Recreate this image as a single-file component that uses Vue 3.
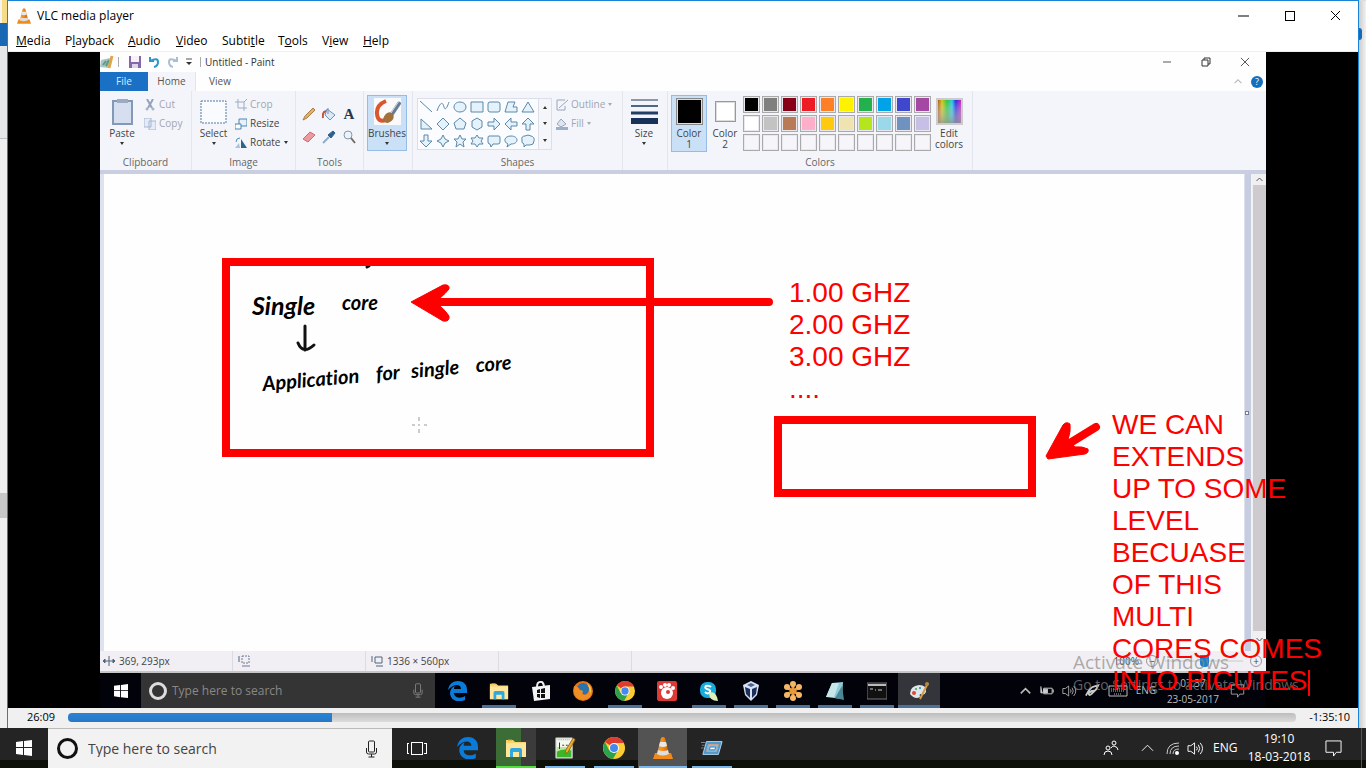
<script setup>
import { ref, computed } from 'vue'

const menus = [
  ['', 'M', 'edia'], ['P', 'l', 'ayback'], ['', 'A', 'udio'], ['', 'V', 'ideo'],
  ['Subti', 't', 'le'], ['T', 'o', 'ols'], ['V', 'i', 'ew'], ['', 'H', 'elp'],
]

const position = ref(215)
const seekStyle = computed(() => ({ '--played': position.value / 10 + '%' }))

const shapes = [
  'M2 2L14 13', 'M2 12C6 1 8 4 9 8S12 9 14 3', 'M8 3C16 3 16 13 8 13S0 3 8 3Z', 'M2 3H14V13H2Z',
  'M4 3H12Q14 3 14 5V11Q14 13 12 13H4Q2 13 2 11V5Q2 3 4 3Z', 'M2 13L5 3H12L10 8H14V13Z', 'M8 3L14 13H2Z',
  'M3 3L14 13H3Z', 'M8 2L14 8L8 14L2 8Z', 'M8 2L14 7L12 13H4L2 7Z', 'M8 2L13 5V11L8 14L3 11V5Z',
  'M2 6H8V2L14 8L8 14V10H2Z', 'M14 6H8V2L2 8L8 14V10H14Z', 'M6 14V8H2L8 2L14 8H10V14Z',
  'M6 2V8H2L8 14L14 8H10V2Z', 'M8 2L10 6L14 8L10 10L8 14L6 10L2 8L6 6Z',
  'M8 2L10 6H14L11 9L12 14L8 11L4 14L5 9L2 6H6Z', 'M8 2L10 5H14L12 8L14 11H10L8 14L6 11H2L4 8L2 5H6Z',
  'M3 3H13Q14 3 14 5V9Q14 11 12 11H7L5 14L4 11Q2 11 2 9V5Q2 3 3 3Z',
  'M8 3C16 3 16 11 8 11L4 14L5 11C0 9 1 3 8 3Z', 'M5 3Q8 1 11 3Q15 4 14 8Q14 12 10 12H6L4 14V11Q1 10 2 7Q1 3 5 3Z',
]

const palette = [
  '#000000', '#7f7f7f', '#880015', '#ed1c24', '#ff7f27', '#fff200', '#22b14c', '#00a2e8', '#3f48cc', '#a349a4',
  '#ffffff', '#c3c3c3', '#b97a57', '#ffaec9', '#ffc90e', '#efe4b0', '#b5e61d', '#99d9ea', '#7092be', '#c8bfe7',
  '#f6f6fa', '#f6f6fa', '#f6f6fa', '#f6f6fa', '#f6f6fa', '#f6f6fa', '#f6f6fa', '#f6f6fa', '#f6f6fa', '#f6f6fa',
]

const guestApps = [
  { id: 'edge', name: 'Edge' }, { id: 'folder', name: 'File Explorer', open: true }, { id: 'store', name: 'Store' },
  { id: 'firefox', name: 'Firefox' }, { id: 'chrome', name: 'Chrome', open: true }, { id: 'gom', name: 'Recorder' },
  { id: 'skype', name: 'Skype', open: true }, { id: 'vbox', name: 'VirtualBox', open: true },
  { id: 'flower', name: 'Meeting', open: true }, { id: 'notepad', name: 'Notepad', open: true },
  { id: 'cmd', name: 'Command Prompt', open: true }, { id: 'paint', name: 'Paint', open: true, active: true },
]

const hostApps = [
  { id: 'edge', name: 'Edge' }, { id: 'folder', name: 'File Explorer', cls: 'copying' },
  { id: 'npp', name: 'Text editor', cls: 'open' }, { id: 'chrome', name: 'Chrome', cls: 'open' },
  { id: 'vlc', name: 'VLC media player', cls: 'open active' }, { id: 'run', name: 'Run', cls: 'open' },
]

const notes = ['WE CAN', 'EXTENDS', 'UP TO SOME', 'LEVEL', 'BECUASE', 'OF THIS', 'MULTI', 'CORES COMES', 'INTO PICUTES']
const speeds = ['1.00 GHZ', '2.00 GHZ', '3.00 GHZ', '....']
</script>

<template>
  <div class="desktop">
    <svg class="defs" aria-hidden="true">
      <defs>
        <linearGradient id="cone" x1="0" x2="1"><stop offset="0" stop-color="#f9a13a" /><stop offset=".5" stop-color="#f58a12" /><stop offset="1" stop-color="#c95d00" /></linearGradient>
        <linearGradient id="rainbow" x1="0" x2="1"><stop offset="0" stop-color="#a63c14" /><stop offset=".2" stop-color="#d4c51c" /><stop offset=".4" stop-color="#2ac43a" /><stop offset=".6" stop-color="#28c8e8" /><stop offset=".75" stop-color="#2a2ae0" /><stop offset="1" stop-color="#e426b4" /></linearGradient>
        <linearGradient id="shade" x1="0" x2="0" y1="0" y2="1"><stop offset="0" stop-color="#fff" stop-opacity="0" /><stop offset="1" stop-color="#999" stop-opacity=".8" /></linearGradient>
        <symbol id="vlc" viewBox="0 0 20 22"><path d="M2 16H18L20 22H0Z" fill="#f28a18" /><path d="M8 1Q10-1 12 1L16 17Q10 21 4 17Z" fill="url(#cone)" /><path d="M7 5H13L14 9Q10 11 6 9Z" fill="#e8e8e8" /><path d="M5 13Q10 15 15 13L16 17Q10 20 4 17Z" fill="#dedede" /></symbol>
        <symbol id="edge" viewBox="0 0 20 20"><path d="M1 9C2 3 6 0 11 0C17 0 20 4 20 9V12H7C7 17 14 18 18 15V19C10 23 3 18 3 12C3 9 5 6 8 5C7 6 7 7 7 8H14C14 3 7 2 1 9Z" fill="#0a7bd8" /></symbol>
        <symbol id="folder" viewBox="0 0 22 20"><path d="M1 2H8L10 4H21V19H1Z" fill="#f7d56c" /><path d="M1 5H21V19H1Z" fill="#ffe69a" /><path d="M5 19V12Q5 10 7 10H15Q17 10 17 12V19H14V14H8V19Z" fill="#2fa7df" /><path d="M3 2H7" stroke="#e39b20" /></symbol>
        <symbol id="store" viewBox="0 0 20 20"><path d="M1 6L19 4V18L3 20Z" fill="#f4f4f4" /><path d="M6 6Q6 1 9 1Q12 0 13 5" fill="none" stroke="#eee" stroke-width="2" /><path d="M6 9L9 8V12H6ZM10 8L14 7V12H10ZM6 13H9V17L6 16ZM10 13H14V17H10Z" fill="#111" /></symbol>
        <symbol id="firefox" viewBox="0 0 20 20"><circle cx="10" cy="10" r="10" fill="#e5731a" /><circle cx="10" cy="8" r="6" fill="#2973ae" /><path d="M1 5Q5 5 7 9Q10 9 10 11Q8 13 12 14Q18 12 17 4Q21 11 17 16Q10 22 3 16Q0 12 1 5Z" fill="#f18d23" /><path d="M14 2Q20 7 17 13Q17 7 14 2Z" fill="#ffd147" /></symbol>
        <symbol id="chrome" viewBox="0 0 22 22"><circle cx="11" cy="11" r="11" fill="#fccd32" /><path d="M11 11L2 5A11 11 0 0 1 21 6H11Z" fill="#df3c30" /><path d="M2 5A11 11 0 0 0 10 22L15 13L11 11L6 13Z" fill="#2ba24c" /><circle cx="11" cy="11" r="5" fill="#fff" /><circle cx="11" cy="11" r="4" fill="#4688ef" /></symbol>
        <symbol id="gom" viewBox="0 0 20 20"><rect width="20" height="20" rx="2" fill="#dd3a37" /><circle cx="10" cy="12" r="6" fill="#fff" /><circle cx="4" cy="6" r="2" fill="#fff" /><circle cx="8" cy="4" r="2" fill="#fff" /><circle cx="12" cy="4" r="2" fill="#fff" /><circle cx="16" cy="7" r="2" fill="#fff" /><circle cx="11" cy="11" r="2" fill="#dd3a37" /></symbol>
        <symbol id="skype" viewBox="0 0 20 20"><rect x="1" y="1" width="16" height="16" rx="7" fill="#18acdc" /><path d="M12 6Q10 4 7 5Q5 7 8 8Q12 9 11 11Q9 14 6 11" fill="none" stroke="#fff" stroke-width="2" /><path d="M10 12Q17 9 19 20Q10 20 10 12Z" fill="#dff0b6" /></symbol>
        <symbol id="vbox" viewBox="0 0 20 20"><path d="M10 0L18 4L16 14L10 20L4 14L2 4Z" fill="#d9e2f2" /><path d="M4 6L9 8V17L5 13ZM16 6L11 8V17L15 13Z" fill="#1c2f5c" /><path d="M6 4L10 2L14 4L10 6Z" fill="#4a6294" /></symbol>
        <symbol id="flower" viewBox="0 0 20 20"><g stroke="#e79a3c" stroke-width="3" stroke-linecap="round"><path d="M10 2V18M3 6L17 14M17 6L3 14" /></g><g fill="#f4b768"><circle cx="10" cy="3" r="3" /><circle cx="10" cy="17" r="3" /><circle cx="4" cy="6" r="3" /><circle cx="16" cy="6" r="3" /><circle cx="4" cy="14" r="3" /><circle cx="16" cy="14" r="3" /></g></symbol>
        <symbol id="notepad" viewBox="0 0 20 20"><path d="M7 2L18 1L17 18L1 16Z" fill="#8fcbd6" /><path d="M7 2L14 2L9 16L1 16Z" fill="#c7e6ea" /><path d="M17 5L19 19L10 17Z" fill="#4c8794" /></symbol>
        <symbol id="cmd" viewBox="0 0 20 20"><rect y="2" width="20" height="16" fill="#111" stroke="#777" /><path d="M1 3H19V5H1Z" fill="#bbb" /><path d="M3 8H6M8 9H9M11 9H15" stroke="#ccc" /></symbol>
        <symbol id="paint" viewBox="0 0 20 20"><path d="M1 13Q1 5 10 4Q18 4 17 11Q15 15 12 13Q10 13 11 16Q6 19 1 13Z" fill="#dfe6ea" /><circle cx="5" cy="12" r="2" fill="#d94a3a" /><circle cx="7" cy="8" r="1" fill="#49a04b" /><circle cx="11" cy="7" r="1" fill="#2a7ac4" /><path d="M11 18L19 2" stroke="#d19b4a" stroke-width="2" /><circle cx="18" cy="3" r="2" fill="#b88639" /></symbol>
        <symbol id="paintfile" viewBox="0 0 14 14"><path d="M1 5L10 3L9 13L0 12Z" fill="#a9c6c4" /><path d="M3 10L6 6M6 11L9 5" stroke="#5d9a80" stroke-width="2" /><path d="M9 13L12 1" stroke="#e0a44a" stroke-width="3" /></symbol>
        <symbol id="npp" viewBox="0 0 22 24"><path d="M1 1H19V23H1Z" fill="#f4f8ee" stroke="#bbb" /><path d="M2 15Q10 11 18 13V22H2Z" fill="#3cb52b" /><path d="M2 11H18V15Q10 12 2 16Z" fill="#b9e59a" /><path d="M3 3H17" stroke="#999" stroke-dasharray="1 1" /><path d="M5 6V13M8 9H10M12 9H14" stroke="#222" stroke-width="1" /><path d="M20 1L22 3L14 17L11 18L12 14Z" fill="#f0ad28" stroke="#94631c" /></symbol>
        <symbol id="run" viewBox="0 0 24 18"><path d="M6 2H23L19 16H2Z" fill="#4598d4" stroke="#b9dcf3" /><path d="M8 5H19L17 13H6Z" fill="#85bce0" stroke="#df9d70" /><path d="M10 8H16L15 11H9Z" fill="#fff" stroke="#2a78c0" /><path d="M0 3H5M1 6H4M0 9H3" stroke="#889" /></symbol>
        <symbol id="win" viewBox="0 0 16 16"><path d="M0 2L7 1V7H0ZM8 1L16 0V7H8ZM0 8H7V15L0 14ZM8 8H16V16L8 15Z" fill="#fff" /></symbol>
        <symbol id="mic" viewBox="0 0 12 18"><rect x="3" y="1" width="6" height="11" rx="1" fill="none" stroke="currentColor" /><path d="M1 8V12Q1 14 3 14H9Q11 14 11 12V8M6 14V17M3 17H9" fill="none" stroke="currentColor" /></symbol>
        <symbol id="up" viewBox="0 0 14 8"><path d="M1 7L7 1L13 7" fill="none" stroke="currentColor" stroke-width="1" /></symbol>
        <symbol id="upbold" viewBox="0 0 14 8"><path d="M1 7L7 1L13 7" fill="none" stroke="currentColor" stroke-width="2" /></symbol>
        <symbol id="speaker" viewBox="0 0 18 16"><path d="M1 5H4L8 2V14L4 11H1Z" fill="none" stroke="currentColor" /><path d="M10 6Q12 8 10 10M12 4Q15 8 12 12M14 2Q19 8 14 14" fill="none" stroke="currentColor" /></symbol>
        <symbol id="note" viewBox="0 0 18 18"><path d="M1 1H17V13H12L9 17V13H1Z" fill="none" stroke="currentColor" stroke-width="1" /></symbol>
        <symbol id="min" viewBox="0 0 11 11"><path d="M0 6H11" stroke="currentColor" /></symbol>
        <symbol id="close" viewBox="0 0 11 11"><path d="M1 1L10 10M10 1L1 10" stroke="currentColor" /></symbol>
      </defs>
    </svg>

    <div class="behind left" aria-hidden="true"><i class="tab"></i><i class="blue"></i><i class="pane"></i><i class="list"></i><i class="mark"></i></div>

    <main class="window">
      <header class="titlebar">
        <svg class="logo"><use href="#vlc" /></svg>
        <h1>VLC media player</h1>
        <button aria-label="Minimize"><svg><use href="#min" /></svg></button>
        <button aria-label="Maximize"><svg viewBox="0 0 11 11" shape-rendering="crispEdges"><path d="M1 1H10V10H1Z" fill="none" stroke="#000" /></svg></button>
        <button aria-label="Close"><svg><use href="#close" /></svg></button>
      </header>
      <nav class="menubar">
        <button v-for="m in menus" :key="m.join('')">{{ m[0] }}<u>{{ m[1] }}</u>{{ m[2] }}</button>
      </nav>

      <section class="video">
        <div class="screen">
          <header class="ptitle">
            <svg class="picon"><use href="#paintfile" /></svg>
            <i class="bar"></i>
            <button aria-label="Save"><svg viewBox="0 0 12 12"><path d="M0 0H12V12H0Z" fill="#8468a8" /><path d="M2 0H10V6H2Z" fill="#f5f2fa" /><path d="M3 8H9V12H3Z" fill="#ddd3ea" /></svg></button>
            <button aria-label="Undo"><svg viewBox="0 0 12 12"><path d="M2 1V5H6M2 5Q10 1 10 6Q10 10 6 11" fill="none" stroke="#2f96c8" stroke-width="2" /></svg></button>
            <button aria-label="Redo"><svg viewBox="0 0 12 12"><path d="M10 1V5H6M10 5Q2 1 2 6Q2 10 6 11" fill="none" stroke="#a9bfd2" stroke-width="2" /></svg></button>
            <button class="more" aria-label="Customize toolbar"><svg viewBox="0 0 6 8"><path d="M0 1H6" stroke="#555" /><path d="M0 4H6L3 7Z" fill="#333" /></svg></button>
            <i class="bar"></i>
            <h2>Untitled - Paint</h2>
            <button class="ctl dim" aria-label="Minimize Paint"><svg viewBox="0 0 10 10"><path d="M1 5H9" stroke="#aaa" stroke-width="2" /></svg></button>
            <button class="ctl" aria-label="Restore Paint"><svg viewBox="0 0 10 10"><path d="M1 3H7V9H1ZM3 3V1H9V7H7" fill="none" stroke="#333" /></svg></button>
            <button class="ctl" aria-label="Close Paint"><svg><use href="#close" /></svg></button>
          </header>
          <nav class="ptabs">
            <button class="file">File</button><button class="on">Home</button><button>View</button>
            <span class="grow"></span>
            <svg class="chev"><use href="#upbold" /></svg>
            <button class="help" aria-label="Help">?</button>
          </nav>

          <section class="ribbon">
            <div class="group clip">
              <div class="body">
                <button class="big"><svg viewBox="0 0 27 27"><path d="M4 3H23V26H4Z" fill="#d5dff0" stroke="#8498b8" stroke-width="2" /><path d="M8 1H19V5H8Z" fill="#9cabc2" /></svg>Paste<b class="arr"></b></button>
                <div class="rows off">
                  <button><svg viewBox="0 0 12 12"><path d="M3 0L8 9M9 0L4 9" stroke="#95a4ba" stroke-width="2" /><circle cx="3" cy="10" r="1" fill="none" stroke="#8ca0ba" /><circle cx="9" cy="10" r="1" fill="none" stroke="#8ca0ba" /></svg>Cut</button>
                  <button><svg viewBox="0 0 12 12"><path d="M0 0H7V9H0ZM5 3H12V12H5Z" fill="#e6ecf7" stroke="#a6b5d2" /></svg>Copy</button>
                </div>
              </div>
              <h3>Clipboard</h3>
            </div>
            <div class="group image">
              <div class="body">
                <button class="big"><svg viewBox="0 0 27 27"><path d="M1 3H26V25H1Z" fill="#f9fbff" stroke="#527ba5" stroke-dasharray="2 1" /></svg>Select<b class="arr"></b></button>
                <div class="rows">
                  <button class="off"><svg viewBox="0 0 12 12"><path d="M3 0V9H12M0 3H9V12M9 3L12 0" fill="none" stroke="#9caec5" /></svg>Crop</button>
                  <button><svg viewBox="0 0 12 12"><path d="M4 1H12V8H4Z" fill="#e6f1fb" stroke="#4b84b2" /><path d="M0 6H6V11H0Z" fill="#fff" stroke="#4b84b2" /></svg>Resize</button>
                  <button><svg viewBox="0 0 12 12"><path d="M6 2V11H12Z" fill="#28668f" /><path d="M4 6L0 11H5Z" fill="#aac4dc" /><path d="M1 5Q1 1 5 1" fill="none" stroke="#4a91c0" /></svg>Rotate<b class="arr"></b></button>
                </div>
              </div>
              <h3>Image</h3>
            </div>
            <div class="group tools">
              <div class="body grid3">
                <button aria-label="Pencil"><svg viewBox="0 0 14 14"><path d="M1 13L3 9L11 1L13 3L5 11Z" fill="#dfb267" stroke="#a97d43" /></svg></button>
                <button aria-label="Fill"><svg viewBox="0 0 14 14"><path d="M5 2L13 8L8 13L3 8Z" fill="#dce8f3" stroke="#6f91b5" /><path d="M1 11Q0 5 4 4" fill="none" stroke="#c65138" stroke-width="2" /><path d="M6 1V7" stroke="#6f91b5" /></svg></button>
                <button class="letter" aria-label="Text">A</button>
                <button aria-label="Eraser"><svg viewBox="0 0 14 14"><path d="M1 9L8 2L13 5L6 12Z" fill="#ee9a9d" stroke="#cf6b70" /></svg></button>
                <button aria-label="Color picker"><svg viewBox="0 0 14 14"><path d="M1 13L7 7" stroke="#8eacc8" stroke-width="2" /><path d="M6 5L9 8L13 3L11 1Z" fill="#2d6290" stroke="#2d6290" /></svg></button>
                <button aria-label="Magnifier"><svg viewBox="0 0 14 14"><circle cx="6" cy="5" r="4" fill="#eaf3fb" stroke="#8499ad" /><path d="M9 8L13 13" stroke="#776b66" stroke-width="2" /></svg></button>
              </div>
              <h3>Tools</h3>
            </div>
            <div class="group brush">
              <div class="body">
                <button class="big picked"><svg viewBox="0 0 27 27"><path d="M0 0H27V27H0Z" fill="#fbfafa" /><path d="M12 3Q2 7 3 16Q4 25 12 22" fill="none" stroke="#d9562f" stroke-width="4" /><path d="M9 21Q12 12 19 15Q22 22 14 25Q10 25 9 21Z" fill="#a2703c" /><path d="M18 16L26 4" stroke="#667d98" stroke-width="4" /><path d="M17 15L25 3" stroke="#d5dce4" stroke-width="1" /></svg>Brushes<b class="arr"></b></button>
              </div>
            </div>
            <div class="group shapes">
              <div class="body">
                <div class="gallery">
                  <div class="cells"><svg v-for="(d, i) in shapes" :key="i" viewBox="0 0 16 16"><path :d="d" :fill="i < 2 ? 'none' : '#e4f3fb'" stroke="#5d87a8" /></svg></div>
                  <div class="steps"><b class="arr up"></b><b class="arr"></b><b class="arr"></b></div>
                </div>
                <div class="rows off">
                  <button><svg viewBox="0 0 12 12"><path d="M1 1H9M1 1V11H9V7M3 9L12 1" fill="none" stroke="#98a5ba" /></svg>Outline<b class="arr"></b></button>
                  <button><svg viewBox="0 0 12 12"><path d="M5 1L10 6L5 9L1 6Z" fill="#dfe6f1" stroke="#98a5ba" /><path d="M0 9H12V12H0Z" fill="#9daec7" /></svg>Fill<b class="arr"></b></button>
                </div>
              </div>
              <h3>Shapes</h3>
            </div>
            <div class="group size">
              <div class="body"><button class="big"><svg viewBox="0 0 27 27"><path d="M0 2H27" stroke="#8c97a8" stroke-width="2" /><path d="M0 8H27" stroke="#4d6785" stroke-width="2" /><path d="M0 15H27" stroke="#233e63" stroke-width="3" /><path d="M0 23H27" stroke="#16315a" stroke-width="6" /></svg>Size<b class="arr"></b></button></div>
            </div>
            <div class="group colors">
              <div class="body">
                <button class="big picked col"><span class="sw black"></span><span>Color<br>1</span></button>
                <button class="big col"><span class="sw white"></span><span>Color<br>2</span></button>
                <div class="palette"><button v-for="(c, i) in palette" :key="i" :aria-label="'Color ' + c" :style="{ backgroundColor: c }"></button></div>
                <button class="big col"><svg viewBox="0 0 27 27"><path d="M1 1H26V26H1Z" fill="url(#rainbow)" stroke="#ccc" stroke-width="2" /><path d="M2 2H25V25H2Z" fill="url(#shade)" /></svg><span>Edit<br>colors</span></button>
              </div>
              <h3>Colors</h3>
            </div>
          </section>

          <section class="work">
            <div class="canvas"></div>
            <div class="gutter"><i></i></div>
            <div class="vscroll"><svg><use href="#upbold" /></svg><i></i><svg class="down"><use href="#upbold" /></svg></div>
          </section>

          <footer class="status">
            <span><svg viewBox="0 0 12 12"><path d="M6 1V11M1 6H11M0 6L2 4V8ZM12 6L10 4V8Z" fill="#53657c" stroke="#53657c" /></svg>369, 293px</span>
            <span><svg viewBox="0 0 12 12"><path d="M1 1V7" stroke="#53657c" /><path d="M4 1H11V8H4Z" fill="none" stroke="#6c7b94" stroke-dasharray="2 1" /><path d="M4 11H12" stroke="#6c7b94" /></svg></span>
            <span><svg viewBox="0 0 12 12"><path d="M1 1V7M4 2H11V8H4ZM5 11H12" fill="none" stroke="#53657c" /></svg>1336 × 560px</span>
            <span></span>
            <div class="zoom"><label for="zoom">100%</label><button aria-label="Zoom out">−</button><input id="zoom" type="range" min="0" max="100" value="50"><button aria-label="Zoom in">+</button></div>
          </footer>

          <footer class="gtask">
            <button class="start" aria-label="Start"><svg><use href="#win" /></svg></button>
            <div class="search"><i class="ring"></i><input type="text" aria-label="Search the recorded desktop" placeholder="Type here to search"><svg class="mic"><use href="#mic" /></svg></div>
            <div class="apps"><button v-for="a in guestApps" :key="a.id" :class="{ open: a.open, active: a.active }" :aria-label="a.name"><svg><use :href="'#' + a.id" /></svg></button></div>
            <span class="grow"></span>
            <div class="tray">
              <svg class="s10"><use href="#upbold" /></svg>
              <svg viewBox="0 0 16 12"><path d="M5 3H14V9H5ZM14 5H16V7H14" fill="none" stroke="#ccc" /><path d="M5 4H9V8H5ZM2 1V8H4" fill="#ccc" stroke="#ccc" /></svg>
              <svg><use href="#speaker" /></svg>
              <svg viewBox="0 0 16 14"><path d="M1 12Q5 3 10 2L14 1L12 5L7 10Q4 13 4 9Q8 6 10 7" fill="none" stroke="#ccc" stroke-width="2" /></svg>
              <svg class="kb" viewBox="0 0 20 12"><path d="M1 1H19V11H1Z" fill="none" stroke="#bbb" /><path d="M3 4H17M3 6H17M6 9H14" stroke="#bbb" stroke-dasharray="1 1" /></svg>
              <span>ENG</span>
              <time>07:37<br>23-05-2017</time>
              <svg><use href="#note" /></svg>
            </div>
          </footer>
        </div>
      </section>

      <div class="seek">
        <span>26:09</span>
        <input v-model="position" type="range" min="0" max="1000" :style="seekStyle" aria-label="Position">
        <span>-1:35:10</span>
      </div>
    </main>

    <div class="behind right" aria-hidden="true"><i class="dot"></i></div>

    <footer class="taskbar">
      <button class="start" aria-label="Start menu"><svg><use href="#win" /></svg></button>
      <div class="search"><i class="ring"></i><input type="text" aria-label="Search" placeholder="Type here to search"><svg class="mic"><use href="#mic" /></svg></div>
      <button class="tv" aria-label="Task view"><svg viewBox="0 0 22 16" shape-rendering="crispEdges"><path d="M5 2H16V14H5ZM3 3H1V13H3M18 3H20V13H18" fill="none" stroke="#fff" /></svg></button>
      <div class="apps"><button v-for="a in hostApps" :key="a.id" :class="a.cls" :aria-label="a.name"><svg><use :href="'#' + a.id" /></svg></button></div>
      <span class="grow"></span>
      <div class="tray">
        <svg class="people" viewBox="0 0 16 16"><g fill="none" stroke="#fff"><circle cx="5" cy="8" r="2" /><path d="M1 15Q1 11 5 11T9 15" /><circle cx="11" cy="3" r="2" /><path d="M8 8Q9 6 11 6Q15 7 15 10" /></g></svg>
        <svg class="chevron"><use href="#up" /></svg>
        <svg class="wifi" viewBox="0 0 14 14"><path d="M1 13Q1 2 13 2M4 13Q4 5 13 5M7 13Q7 8 13 8" fill="none" stroke="#ccc" /><circle cx="11" cy="12" r="2" fill="#fff" /></svg>
        <svg class="spk"><use href="#speaker" /></svg>
        <span class="lang">ENG</span>
        <time>19:10<br>18-03-2018</time>
        <svg class="bell"><use href="#note" /></svg>
        <i class="peek"></i>
      </div>
    </footer>

    <svg class="marks" viewBox="0 0 1366 768" preserveAspectRatio="xMinYMin meet">
      <g class="ink">
        <text x="252" y="315" class="large">Single</text>
        <text x="342" y="310">core</text>
        <path d="M305 326L305 350M298 343Q303 355 314 345" />
        <g transform="rotate(-5 263 391)">
          <text x="263" y="391">Application</text>
          <text x="377" y="391">for</text>
          <text x="412" y="391">single</text>
          <text x="477" y="391">core</text>
        </g>
        <path d="M367 267L369 266" />
      </g>
      <path class="cross" d="M419 417V421M419 429V433M412 425H415M424 425H427M419 424V426" />
      <g class="wm"><text x="1073" y="669" class="w1">Activate Windows</text><text x="1073" y="690" class="w2">Go to Settings to activate Windows.</text></g>
      <g class="red">
        <rect x="226" y="262" width="424" height="191" />
        <rect x="778" y="420" width="254" height="73" />
        <path d="M440 302H769M1070 443L1096 427" stroke-linecap="round" />
        <path class="solid" d="M411 302L443 285Q450 284 449 289Q446 293 439 299V305Q446 311 449 316Q450 322 443 321Z" />
        <path class="solid" d="M1046 456L1063 425Q1066 421 1070 424Q1071 431 1068 440L1075 447Q1082 446 1088 449Q1089 453 1085 454L1048 459Z" />
        <text v-for="(s, i) in speeds" :key="s" x="789" :y="302 + i * 32">{{ s }}</text>
        <text v-for="(n, i) in notes" :key="n" x="1112" :y="434 + i * 32">{{ n }}</text>
        <path class="caret" d="M1309 670V696" />
      </g>
    </svg>
  </div>
</template>

<style>
html, body { margin: 0; overflow: hidden; }
</style>

<style scoped>
.desktop { position: relative; min-height: 100vh; display: grid; grid-template: minmax(0, 1fr) 40px / 7px minmax(0, 1fr) 7px; background: #efefef; font: 12px/16px "Open Sans", "Noto Sans", sans-serif; color: #000; }
.defs { position: absolute; width: 0; height: 0; }
* { box-sizing: border-box; }
button { border: 0; padding: 0; margin: 0; background: none; font: inherit; color: inherit; }
input { font: inherit; color: inherit; margin: 0; min-width: 0; }
h1, h2, h3 { font: inherit; margin: 0; }
svg { display: block; flex: none; }
i { display: block; }
.grow { flex: 1; }
.behind { display: flex; flex-direction: column; overflow: hidden; }
.tab { height: 23px; background: linear-gradient(90deg, #f3f3f3 2px, #f6dc87 2px); }
.blue { height: 23px; background: #1968b3; }
.pane { height: 92px; background: #e4e6e8; }
.list { height: 355px; border-top: 1px solid #c0c0c0; background: #efefef; }
.mark { height: 25px; background: #c7c7c7; }
.right { background: linear-gradient(90deg, #ccc, #f2f2f2); border-top: 1px solid #ddd; }
.dot { width: 3px; height: 12px; margin-top: 27px; background: #1968b3; border-radius: 0 6px 6px 0; }

.window { display: flex; flex-direction: column; min-width: 0; border: 1px solid #1883d7; border-bottom: 0; background: #fff; }
.titlebar { height: 29px; display: flex; align-items: center; padding-left: 9px; }
.titlebar h1 { flex: 1; margin-left: 6px; }
.titlebar .logo { width: 14px; height: 16px; }
.titlebar button { width: 46px; height: 29px; display: grid; place-items: center; }
.titlebar button svg { width: 11px; height: 11px; }
.menubar { height: 22px; display: grid; grid-template-columns: 49px 63px 48px 46px 56px 44px 41px 40px; padding-left: 8px; border-bottom: 1px solid #eee; }
.menubar button { text-align: left; white-space: nowrap; }

.video { flex: 1; display: flex; min-height: 0; background: #000; padding: 0 92px; }
.screen { flex: 1; min-width: 0; display: flex; flex-direction: column; background: #fefefe; font-size: 10px; line-height: 11px; color: #444; }
.ptitle { height: 20px; display: flex; align-items: center; }
.ptitle .picon { width: 14px; height: 14px; }
.ptitle .bar { width: 1px; height: 10px; background: #aaa; margin: 0 4px; }
.ptitle button { width: 19px; height: 20px; display: grid; place-items: center; }
.ptitle button svg { width: 12px; height: 12px; }
.ptitle .more { width: 14px; }
.ptitle .more svg { width: 6px; height: 8px; }
.ptitle .bar + button { margin-left: 2px; }
.ptitle h2 { flex: 1; white-space: nowrap; color: #333; }
.ptitle .ctl { width: 39px; }
.ptitle .ctl svg { width: 10px; height: 10px; }
.ptitle .ctl:last-child { margin-right: 2px; }
.ptabs { height: 19px; display: flex; align-items: center; color: #555; }
.ptabs button { height: 19px; width: 48px; }
.ptabs .file { background: #1a70c4; color: #d8ebff; }
.ptabs .on { background: #f4f5fa; border-right: 1px solid #e2e4ee; }
.ptabs .chev { width: 8px; height: 5px; color: #bbb; margin-right: 9px; }
.ptabs .help { width: 12px; height: 12px; border-radius: 6px; background: #1470bd; color: #fff; margin-right: 3px; font-size: 9px; line-height: 12px; }

.ribbon { display: flex; background: #f4f5fa; height: 83px; border-bottom: 4px solid #c9cee0; }
.group { display: flex; flex-direction: column; border-right: 1px solid #e4e6ee; padding-top: 4px; }
.group h3 { text-align: center; color: #666; height: 14px; line-height: 14px; }
.body { display: flex; height: 60px; }
.clip { width: 92px; } .image { width: 104px; } .tools { width: 68px; } .brush { width: 49px; }
.shapes { width: 210px; } .size { width: 45px; } .colors { width: 305px; }
.big { width: 44px; height: 56px; flex: none; display: flex; flex-direction: column; align-items: center; padding-top: 3px; gap: 3px; line-height: 11px; }
.big svg { width: 27px; height: 27px; }
.picked { background: #c9e0f7; outline: 1px solid #94bce5; outline-offset: -1px; }
.arr { display: inline-block; border: 2px solid transparent; border-top: 3px solid #333; border-bottom: 0; width: 0; height: 0; }
.arr.up { transform: rotate(180deg); }
.rows { display: flex; flex-direction: column; }
.rows button { display: flex; align-items: center; height: 19px; gap: 3px; }
.rows svg { width: 12px; height: 12px; }
.off { color: #a2a5b0; } .off .arr { border-top-color: #aaa; }
.image .big { width: 43px; }
.grid3 { display: grid; grid-template: 23px 23px / 20px 20px 20px; padding: 7px 3px; }
.grid3 button { display: grid; place-items: center; }
.grid3 svg { width: 14px; height: 14px; }
.letter { font: 700 15px/20px "Liberation Serif", serif; color: #25374f; }
.brush .big { width: 40px; margin-left: 3px; }
.gallery { display: flex; width: 135px; height: 52px; margin: 3px 4px 0; border: 1px solid #dcdfe9; background: #fbfcff; }
.cells { display: grid; grid-template-columns: repeat(7, 17px); grid-auto-rows: 17px; flex: 1; }
.cells svg { width: 16px; height: 16px; }
.steps { width: 13px; border-left: 1px solid #dcdfe9; display: flex; flex-direction: column; justify-content: space-around; align-items: center; background: #f5f6fa; }
.col { width: 36px; }
.size .big { width: 42px; }
.colors .body { padding-left: 3px; }
.colors .big { height: 57px; text-align: center; }
.sw { width: 27px; height: 27px; border: 2px solid #888; background: #000; outline: 1px solid #ddd; outline-offset: -2px; }
.sw.white { width: 21px; height: 21px; margin: 3px; border: 1px solid #999; background: #fff; }
.palette { display: grid; grid-template-columns: repeat(10, 17px); grid-auto-rows: 17px; gap: 2px; width: 188px; margin: 1px 0; }
.palette button { border: 1px solid #aaa; box-shadow: inset 0 0 0 1px #e8e8ee; }

.work { flex: 1; display: flex; min-height: 0; border-left: 4px solid #dde1f0; }
.canvas { flex: 1; background: #fefefe; }
.gutter { width: 7px; background: #c7cde0; border-left: 1px solid #dde1ee; display: flex; align-items: center; }
.gutter i { width: 4px; height: 4px; border: 1px solid #777e92; background: #fff; }
.vscroll { width: 15px; border-left: 1px solid #f4f4f4; background: #f0f0f2; display: flex; flex-direction: column; align-items: center; }
.vscroll svg { width: 7px; height: 5px; margin: 3px 0; color: #555; }
.vscroll .down { transform: rotate(180deg); margin: 6px 0 9px; }
.vscroll i { flex: 1; width: 13px; background: #cdcbcd; }
.status { height: 22px; display: flex; background: #f1eff3; border-bottom: 2px solid #c6c6c8; color: #444; }
.status > span { width: 133px; display: flex; align-items: center; gap: 4px; padding-left: 3px; border-right: 1px solid #dcdbe0; }
.status > span + span { padding-left: 5px; }
.status svg { width: 12px; height: 12px; }
.zoom { margin-left: auto; display: flex; align-items: center; gap: 7px; padding-right: 4px; }
.zoom button { width: 12px; height: 12px; border: 1px solid #999; border-radius: 6px; line-height: 9px; }
.zoom input { appearance: none; width: 78px; height: 2px; background: #ddd; }
.zoom input::-webkit-slider-thumb { appearance: none; width: 9px; height: 12px; background: #1b7fd0; border-radius: 0 0 4px 4px; }

.gtask { height: 35px; display: flex; background: #02030a; color: #bbb; }
.gtask .start { width: 41px; display: grid; place-items: center; }
.gtask .start svg { width: 14px; height: 14px; }
.gtask .search { width: 294px; display: flex; align-items: center; background: #343434; padding: 0 12px 0 8px; }
.search input { flex: 1; border: 0; background: none; padding: 0; outline: 0; }
.gtask .search input { font-size: 12px; margin-left: 5px; }
.gtask input::placeholder { color: #888; opacity: 1; }
.gtask .mic { width: 10px; height: 15px; color: #888; }
.ring { width: 18px; height: 18px; border: 3px solid #ddd; border-radius: 50%; }
.apps { display: flex; }
.gtask .apps button { width: 42px; display: grid; place-items: center; border-bottom: 3px solid transparent; border-top: 3px solid transparent; }
.gtask .apps { padding-left: 1px; }
.gtask .apps .open { background: linear-gradient(#4c7198, #4c7198) center bottom / 34px 3px no-repeat border-box; }
.gtask .apps .active { background: linear-gradient(#4c7198, #4c7198) center bottom / 42px 3px no-repeat border-box, #34353b border-box; }
.gtask .apps svg { width: 20px; height: 20px; }
.tray { display: flex; align-items: center; }
.gtask .tray { gap: 8px; padding-right: 21px; }
.gtask .tray svg { width: 15px; height: 14px; }
.gtask .tray .s10 { width: 11px; height: 8px; }
.gtask .tray .kb { width: 20px; }
.gtask time { width: 58px; line-height: 16px; text-align: center; }

.seek { height: 20px; display: flex; align-items: center; gap: 13px; background: #f0f0f0; padding: 0 8px 2px 19px; font-size: 11px; }
.seek input { flex: 1; appearance: none; height: 9px; border-radius: 4px; background: linear-gradient(#2a83d3, #2678c8) 0 0 / var(--played) 100% no-repeat, linear-gradient(#bdbdbd, #dcdcdc); }
.seek input::-webkit-slider-thumb { appearance: none; width: 1px; height: 9px; }

.taskbar { grid-column: 1 / -1; display: flex; color: #fff; background: linear-gradient(#242424 32px, #0d0f09 32px); }
.taskbar .start { width: 48px; display: grid; place-items: center; }
.taskbar .start svg { width: 16px; height: 16px; }
.taskbar .search { width: 344px; display: flex; align-items: center; background: #f2f2f2; color: #333; padding: 0 14px 0 9px; border-top: 1px solid #bbb; }
.taskbar .ring { width: 21px; height: 21px; border-color: #111; }
.taskbar .search input { font-size: 14px; margin-left: 10px; }
.taskbar input::placeholder { color: #444; opacity: 1; }
.taskbar .mic { width: 13px; height: 18px; color: #222; }
.tv { width: 50px; display: grid; place-items: center; }
.tv svg { width: 22px; height: 16px; }
.taskbar .apps button { width: 49px; display: grid; place-items: center; }
.taskbar .apps svg { width: 22px; height: 22px; }
.taskbar .open { background: linear-gradient(#78b8ec, #78b8ec) center bottom / 40px 2px no-repeat; }
.taskbar .active { background: linear-gradient(#78b8ec, #78b8ec) center bottom / 48px 2px no-repeat, #535353; }
.taskbar .copying { background: linear-gradient(#4fe03c, #4fe03c) 5px 38px / 40px 2px no-repeat, linear-gradient(90deg, #3d6d36 25px, #3b3b3b 25px) 5px 0 / 40px 38px no-repeat; }
.people { width: 16px; height: 16px; margin-right: 22px; }
.chevron { width: 13px; height: 8px; margin-right: 12px; }
.wifi { width: 14px; height: 14px; margin-right: 7px; }
.spk { width: 17px; height: 15px; margin-right: 9px; }
.lang { width: 34px; }
.taskbar time { width: 64px; text-align: center; line-height: 18px; }
.bell { width: 17px; height: 17px; margin: 0 19px 0 14px; }
.peek { width: 1px; height: 40px; background: #555; margin-right: 4px; }

.marks { position: absolute; inset: 0; width: 100%; height: 100%; pointer-events: none; }
.ink { font: italic 700 20px Lato, sans-serif; font-variant-ligatures: none; }
.ink .large { font-size: 25px; }
.ink path { fill: none; stroke: #111; stroke-width: 3; stroke-linecap: round; stroke-linejoin: round; }
.cross { stroke: #999; }
.wm { fill: #8a8a8a; fill-opacity: .7; }
.w1 { font-size: 19px; } .w2 { font-size: 14px; }
.red { font: 28px "Liberation Sans", Arial, sans-serif; fill: #f00; }
.red rect, .red path { fill: none; stroke: #f00; stroke-width: 8; }
.red .solid { fill: #f00; stroke-width: 1; }
.red .caret { stroke-width: 2; }
</style>
